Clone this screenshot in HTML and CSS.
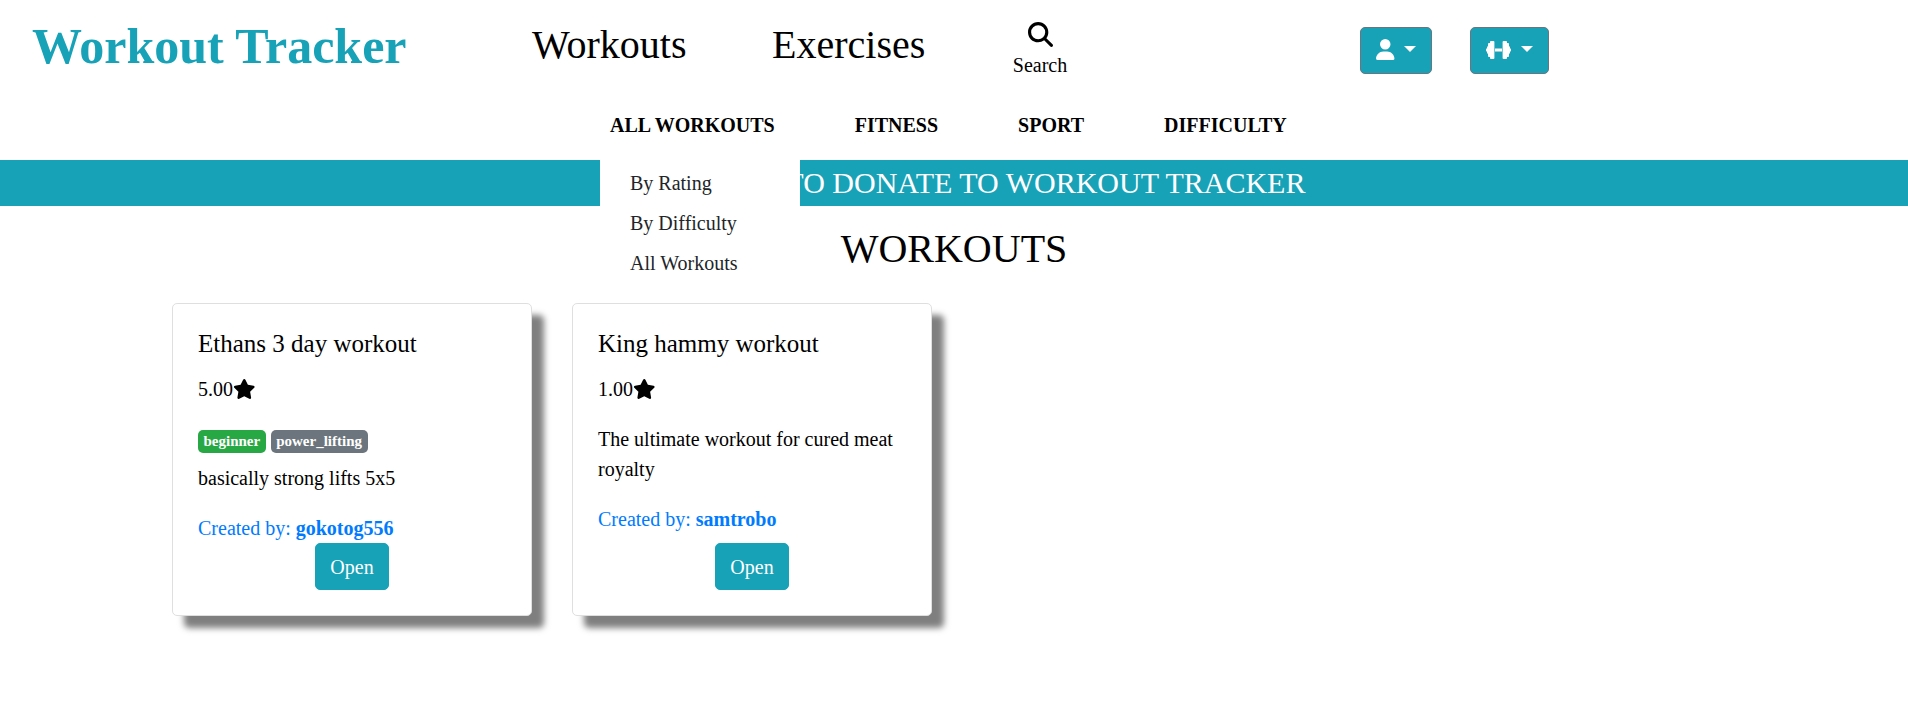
FILE: index.html
```html
<!DOCTYPE html>
<html lang="en">
<head>
<meta charset="utf-8">
<title>Workout Tracker</title>
<link rel="stylesheet" href="styles.css">
</head>
<body>
<svg class="sprite" aria-hidden="true">
  <symbol id="star" viewBox="0 0 576 512"><path d="M316.900 18C311.600 7 300.400 0 288.100 0s-23.400 7-28.800 18L195 150.300 51.400 171.500c-12 1.800-22 10.200-25.700 21.700s-.7 24.200 7.900 32.700L137.800 329 113.200 474.700c-2 12 3 24.200 12.900 31.300s23 8 33.800 2.300l128.300-68.500 128.300 68.500c10.800 5.700 23.900 4.900 33.800-2.300s14.900-19.300 12.900-31.300L438.500 329 542.700 225.900c8.600-8.500 11.700-21.200 7.900-32.700s-13.700-19.900-25.700-21.700L381.200 150.300 316.900 18z"/></symbol>
</svg>
<header class="topbar">
  <a class="brand">Workout Tracker</a>
  <nav class="mainnav">
    <a class="mainlink">Workouts</a>
    <a class="mainlink">Exercises</a>
    <a class="search">
      <svg class="search-icon" viewBox="0 0 512 512"><path d="M416 208c0 45.900-14.900 88.300-40 122.700L502.600 457.400c12.500 12.500 12.500 32.800 0 45.300s-32.800 12.500-45.300 0L330.700 376c-34.400 25.200-76.800 40-122.700 40C93.100 416 0 322.900 0 208S93.100 0 208 0S416 93.100 416 208zM208 352a144 144 0 1 0 0-288 144 144 0 1 0 0 288z"/></svg>
      <span>Search</span>
    </a>
  </nav>
  <div class="actions">
    <button class="btn toggle"><svg class="user-icon" viewBox="0 0 448 512"><path d="M224 256A128 128 0 1 0 224 0a128 128 0 1 0 0 256zm-45.700 48C79.800 304 0 383.800 0 482.300C0 498.700 13.300 512 29.700 512H418.300c16.400 0 29.700-13.300 29.700-29.700C448 383.800 368.200 304 269.700 304H178.300z"/></svg><i class="caret"></i></button>
    <button class="btn toggle"><svg class="dumbbell-icon" viewBox="0 0 25 20"><path d="M4 2Q4 1 5 1H7.400Q8.400 1 8.400 2V18Q8.400 19 7.400 19H5Q4 19 4 18V17L3 17Q2 17 2 16V14L1 13V12L0 10.700V9.300L1 8V7L2 6V4Q2 3 3 3H4ZM21 2Q21 1 20 1H17.600Q16.600 1 16.600 2V18Q16.600 19 17.600 19H20Q21 19 21 18V17H22Q23 17 23 16V14L24 13V12L25 10.700V9.300L24 8V7L23 6V4Q23 3 22 3H21ZM9 8.500H16V11.500H9Z"/></svg><i class="caret"></i></button>
  </div>
</header>
<nav class="subnav">
  <div class="subitem">
    <a>ALL WORKOUTS</a>
    <div class="menu">
      <a>By Rating</a>
      <a>By Difficulty</a>
      <a>All Workouts</a>
    </div>
  </div>
  <div class="subitem"><a>FITNESS</a></div>
  <div class="subitem"><a>SPORT</a></div>
  <div class="subitem"><a>DIFFICULTY</a></div>
</nav>
<div class="banner">CLICK HERE TO DONATE TO WORKOUT TRACKER</div>
<h1 class="heading">WORKOUTS</h1>
<main class="cards">
  <article class="card">
    <h5 class="card-title">Ethans 3 day workout</h5>
    <p class="rating">5.00<svg class="star"><use href="#star"/></svg></p>
    <div class="badges"><span class="badge green">beginner</span><span class="badge grey">power_lifting</span></div>
    <p class="desc">basically strong lifts 5x5</p>
    <a class="author">Created by: <b>gokotog556</b></a>
    <a class="btn open">Open</a>
  </article>
  <article class="card">
    <h5 class="card-title">King hammy workout</h5>
    <p class="rating">1.00<svg class="star"><use href="#star"/></svg></p>
    <p class="desc">The ultimate workout for cured meat royalty</p>
    <a class="author">Created by: <b>samtrobo</b></a>
    <a class="btn open">Open</a>
  </article>
</main>
</body>
</html>
```
FILE: styles.css
```css
* { box-sizing: border-box; }
body {
  margin: 0;
  min-height: 720px;
  background: #fff;
  color: #000;
  font: 20px/1.5 "Liberation Serif", "Times New Roman", serif;
}
h1, h5, p { margin: 0; font-weight: 400; }
.sprite { display: none; }

.topbar { display: flex; align-items: flex-start; height: 100px; }
.brand {
  width: 532px;
  padding: 9px 0 0 32px;
  color: #17a2b8;
  font-size: 50px;
  font-weight: 700;
}
.mainnav { display: flex; width: 828px; }
.mainlink { width: 240px; padding-top: 15px; font-size: 40px; }
.search {
  display: flex;
  flex-direction: column;
  align-items: center;
  width: 56px;
  padding-top: 22px;
}
.search-icon { width: 25px; height: 25px; margin-bottom: 3px; }
.actions { display: flex; gap: 38px; padding-top: 27px; }

.btn {
  display: flex;
  align-items: center;
  height: 47px;
  padding: 0 15px;
  border: 1px solid #17a2b8;
  border-radius: 5px;
  background: #17a2b8;
  color: #fff;
}
.toggle { border-color: #6c757d; padding-bottom: 2px; }
.toggle svg { height: 20px; fill: #fff; }
.toggle .user-icon { width: 18.5px; height: 21px; margin-right: -1px; }
.dumbbell-icon { width: 25px; }
.caret {
  margin: 0 0 1px 10px;
  border: 6px solid transparent;
  border-top-color: #fff;
  border-bottom: 0;
}

.subnav {
  display: flex;
  gap: 60px;
  height: 60px;
  padding: 10px 0 0 600px;
  font-weight: 700;
}
.subitem { position: relative; padding: 0 10px; }
.menu {
  position: absolute;
  top: 50px;
  left: 0;
  display: flex;
  flex-direction: column;
  gap: 10px;
  width: 200px;
  padding: 8px 30px;
  background: #fff;
  color: #212529;
  font-weight: 400;
}

.banner {
  height: 46px;
  background: #17a2b8;
  color: #fff;
  font-size: 30px;
  line-height: 46px;
  text-align: center;
}
.heading {
  height: 97px;
  padding-top: 19px;
  font-size: 40px;
  line-height: 48px;
  text-align: center;
}

.cards { display: flex; gap: 40px; padding-left: 172px; }
.card {
  display: flex;
  flex-direction: column;
  width: 360px;
  height: 313px;
  padding: 25px;
  border: 1px solid #dfdfdf;
  border-radius: 5px;
  background: #fff;
  box-shadow: 12px 12px 6px rgba(0, 0, 0, .5);
}
.card-title { margin-bottom: 15px; font-size: 25px; line-height: 30px; }
.rating { display: flex; height: 30px; margin-bottom: 20px; }
.star { width: 22.5px; height: 20px; margin-top: 5px; }
.badges { display: flex; gap: 5px; height: 39px; padding-top: 6px; }
.badge {
  height: 23px;
  padding: 4px 5.5px;
  border-radius: 5px;
  color: #fff;
  font-size: 15px;
  font-weight: 700;
  line-height: 15px;
}
.green { background: #28a745; }
.grey { background: #6c757d; }
.desc { margin-bottom: 20px; }
.author { color: #007bff; }
.open { align-self: center; margin-top: auto; padding: 0 14.6px; }
```
